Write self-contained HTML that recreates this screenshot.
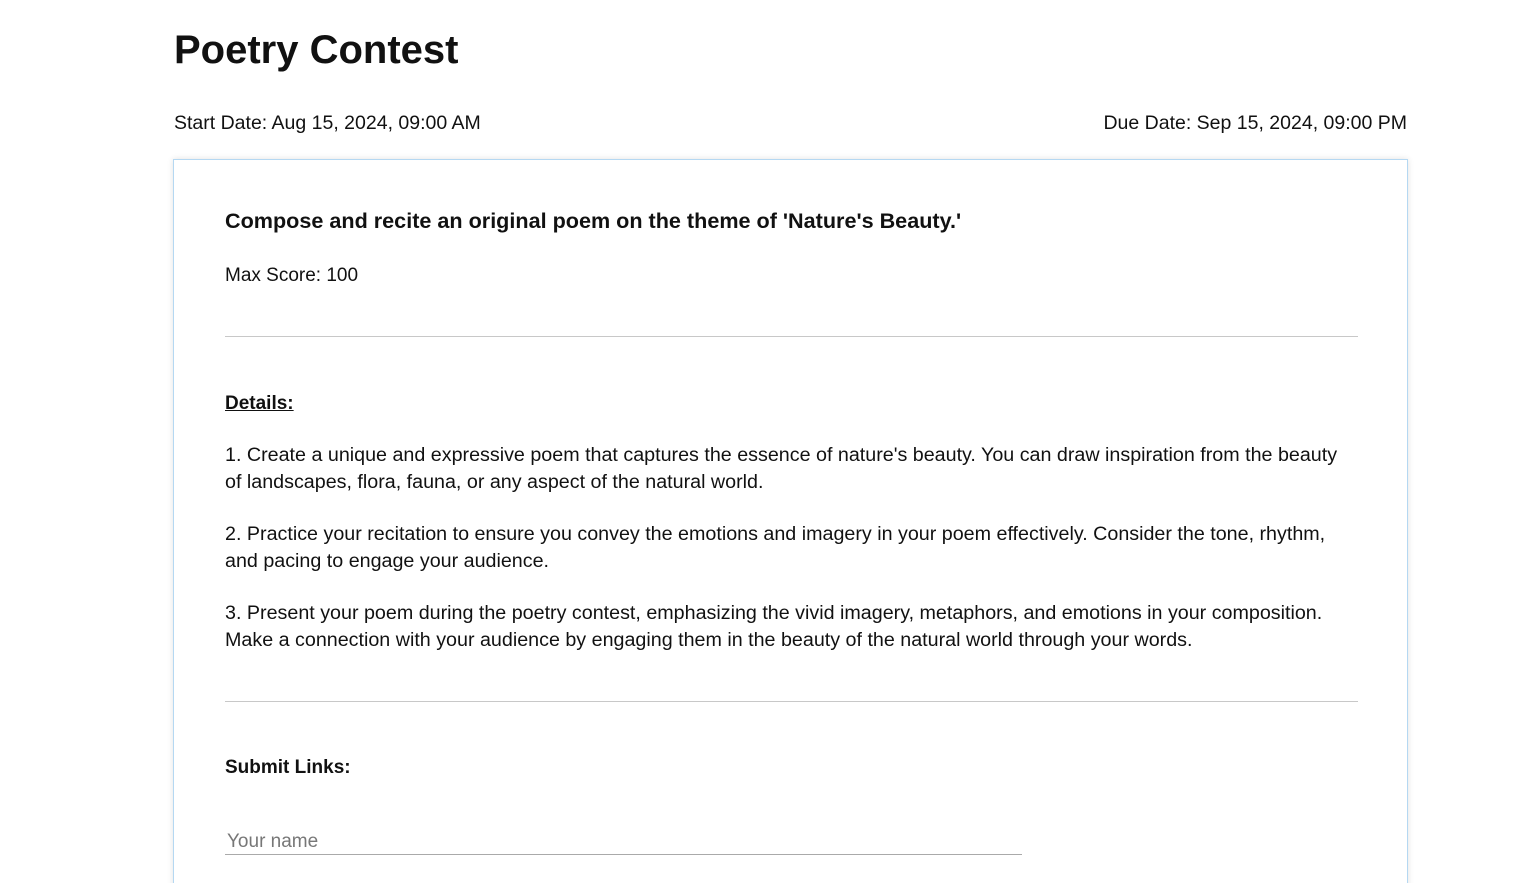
<!DOCTYPE html>
<html><head><style>
html,body{margin:0;background:#fff;font-family:"Liberation Sans",sans-serif;color:#111;overflow:hidden;height:883px;}
#w{position:relative;width:1513px;height:883px;overflow:hidden;}
.t{position:absolute;left:174px;top:28px;font-size:40px;font-weight:bold;margin:0;}
.d{position:absolute;top:112px;font-size:19.5px;}
.card{position:absolute;left:173px;top:159px;width:1233px;height:780px;border:1px solid #b5d8f2;box-shadow:0 0 6px rgba(0,0,0,0.12);}
.a{position:absolute;left:51px;font-size:19px;}
.hr{position:absolute;left:51px;width:1133px;height:1px;background:#c8c8c8;}
p{margin:0;white-space:nowrap;}
</style></head><body><div id="w">
<h1 class="t">Poetry Contest</h1>
<div class="d" style="left:174px">Start Date: Aug 15, 2024, 09:00 AM</div>
<div class="d" style="right:106px">Due Date: Sep 15, 2024, 09:00 PM</div>
<div class="card">
<div class="a" style="top:48px;font-size:21.6px;font-weight:bold">Compose and recite an original poem on the theme of 'Nature's Beauty.'</div>
<div class="a" style="top:105px">Max Score: 100</div>
<div class="hr" style="top:176px"></div>
<div class="a" style="top:233px;font-weight:bold;text-decoration:underline">Details:</div>
<div class="a" style="top:282px;width:1133px;line-height:27px;font-size:19.7px">
<p>1. Create a unique and expressive poem that captures the essence of nature's beauty. You can draw inspiration from the beauty<br>of landscapes, flora, fauna, or any aspect of the natural world.</p>
<p style="margin-top:25px">2. Practice your recitation to ensure you convey the emotions and imagery in your poem effectively. Consider the tone, rhythm,<br>and pacing to engage your audience.</p>
<p style="margin-top:25px">3. Present your poem during the poetry contest, emphasizing the vivid imagery, metaphors, and emotions in your composition.<br>Make a connection with your audience by engaging them in the beauty of the natural world through your words.</p>
</div>
<div class="hr" style="top:541px"></div>
<div class="a" style="top:597px;font-weight:bold">Submit Links:</div>
<div class="a" style="top:671px;left:53px;color:#777">Your name</div>
<div style="position:absolute;left:51px;top:694px;width:797px;height:1px;background:#aaa"></div>
</div>
</div></body></html>
